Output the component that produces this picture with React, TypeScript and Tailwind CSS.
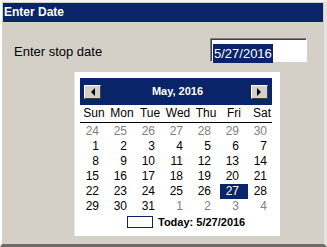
import React from 'react';

const font = { fontFamily: '"Liberation Sans", Arial, sans-serif' };

const days = ['Sun', 'Mon', 'Tue', 'Wed', 'Thu', 'Fri', 'Sat'];

// 6 weeks shown, dimmed = other month
const weeks: { d: number; dim?: boolean }[][] = [
  [24, 25, 26, 27, 28, 29, 30].map((d) => ({ d, dim: true })),
  [1, 2, 3, 4, 5, 6, 7].map((d) => ({ d })),
  [8, 9, 10, 11, 12, 13, 14].map((d) => ({ d })),
  [15, 16, 17, 18, 19, 20, 21].map((d) => ({ d })),
  [22, 23, 24, 25, 26, 27, 28].map((d) => ({ d })),
  [
    { d: 29 },
    { d: 30 },
    { d: 31 },
    { d: 1, dim: true },
    { d: 2, dim: true },
    { d: 3, dim: true },
    { d: 4, dim: true },
  ],
];

function NavButton({ dir }: { dir: 'left' | 'right' }) {
  return (
    <div className="w-[17px] h-[14px] bg-[#d4d0c8] border-t border-l border-t-white border-l-white border-b border-r border-b-[#404040] border-r-[#404040] flex items-center justify-center">
      {dir === 'left' ? (
        <div className="w-0 h-0 border-y-[4px] border-y-transparent border-r-[4px] border-r-black" />
      ) : (
        <div className="w-0 h-0 border-y-[4px] border-y-transparent border-l-[4px] border-l-black" />
      )}
    </div>
  );
}

export default function App() {
  return (
    <div
      className="w-[327px] h-[247px] bg-[#d4d0c8] border-t-2 border-l-2 border-t-[#f4f4f4] border-l-white border-b-[3px] border-b-[#6b6b6b] border-r-[3px] border-r-[#e4e2dc] pt-px pl-px flex flex-col overflow-hidden"
      style={font}
    >
      <div className="h-[19px] w-[320px] bg-[#0a246a] text-white text-[12px] font-bold leading-[19px] pl-[1px]">
        Enter Date
      </div>

      <div className="mt-[16px] flex items-center h-[24px]">
        <span className="ml-[11px] mt-[3px] text-[13px] text-black">Enter stop date</span>
        <div className="ml-auto mr-[17px] w-[97px] h-[24px] bg-white border-t border-l border-t-[#808080] border-l-[#808080] border-b border-r border-b-white border-r-white shadow-[inset_1px_1px_0_#404040] pl-[2px] pt-[2px]">
          <span className="inline-block bg-[#0a246a] text-white text-[13px] leading-[19px] px-px">
            5/27/2016
          </span>
        </div>
      </div>

      <div className="mt-[10px] ml-[71px] w-[206px] h-[164px] bg-white border-l border-l-[#e8e8e8] pt-[6px] pl-[5px] text-[12px]">
        <div className="w-[192px] h-[27px] bg-[#0a246a] flex items-center justify-between px-[4px]">
          <NavButton dir="left" />
          <span className="text-white font-bold text-[11px] ml-[3px]">May, 2016</span>
          <NavButton dir="right" />
        </div>

        <div className="w-[192px] h-[18px] border-b border-black grid grid-cols-[repeat(7,28px)] items-center">
          {days.map((n) => (
            <span key={n} className="text-center text-black leading-[17px]">
              {n}
            </span>
          ))}
        </div>

        <div className="mt-[1px] grid grid-cols-[repeat(7,28px)]">
          {weeks.flat().map((c, i) => {
            const sel = i === 33;
            return (
              <span
                key={i}
                className={`h-[15px] leading-[15px] text-right pr-[9px] ${
                  sel ? 'bg-[#0a246a] text-white' : c.dim ? 'text-[#808080]' : 'text-black'
                }`}
              >
                {c.d}
              </span>
            );
          })}
        </div>

        <div className="mt-px flex items-center h-[14px] ml-[47px]">
          <div className="w-[26px] h-[12px] border border-[#0a246a]" />
          <span className="ml-[5px] font-bold text-[11px] text-black">Today: 5/27/2016</span>
        </div>
      </div>
    </div>
  );
}
